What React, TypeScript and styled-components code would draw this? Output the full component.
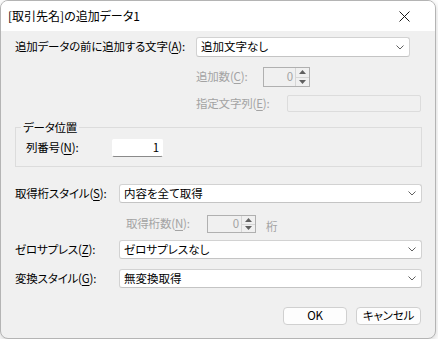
import React from "react";
import styled, { createGlobalStyle } from "styled-components";

const Global = createGlobalStyle`
  html, body { margin: 0; padding: 0; background: #ffffff; }
  body {
    font-family: "Noto Sans CJK JP", "Noto Sans", sans-serif;
    font-size: 11.5px;
    letter-spacing: -0.2px;
    font-feature-settings: "palt";
    color: #000;
  }
  u { text-underline-offset: 2px; }
`;

const Window = styled.div`
  width: 434px;
  height: 337px;
  border: 1px solid #b4b4b4;
  border-radius: 8px;
  overflow: hidden;
  background: #f0f0f0;
  box-shadow: 0 2px 6px rgba(0, 0, 0, 0.18);
  display: flex;
  flex-direction: column;
`;

const TitleBar = styled.div`
  height: 30px;
  background: #ffffff;
  display: flex;
  align-items: center;
  justify-content: space-between;
  padding: 0 25px 0 7px;
  flex-shrink: 0;
`;

const Title = styled.span`
  font-size: 12px;
  letter-spacing: 0;
  line-height: 1;
  padding-bottom: 1px;
`;

const Body = styled.div`
  flex: 1;
  padding: 6px 0 0 14px;
  display: flex;
  flex-direction: column;
`;

const Row = styled.div<{ $indent?: number; $top?: number; $h?: number }>`
  display: flex;
  align-items: center;
  height: ${(p) => p.$h ?? 20}px;
  margin-left: ${(p) => p.$indent ?? 0}px;
  margin-top: ${(p) => p.$top ?? 0}px;
`;

const Label = styled.span<{ $w: number; $disabled?: boolean }>`
  width: ${(p) => p.$w}px;
  flex-shrink: 0;
  white-space: nowrap;
  color: ${(p) => (p.$disabled ? "#a3a3a3" : "#000")};
  line-height: 1;
`;

const Combo = styled.div<{ $w: number }>`
  width: ${(p) => p.$w}px;
  height: 100%;
  box-sizing: border-box;
  background: #ffffff;
  border: 1px solid #d2d2d2;
  border-bottom-color: #c4c4c4;
  border-radius: 3px;
  display: flex;
  align-items: center;
  justify-content: space-between;
  padding: 0 5px 0 4px;
`;

const ComboText = styled.span`
  line-height: 1;
  letter-spacing: 0;
`;

const Spin = styled.div<{ $w: number }>`
  width: ${(p) => p.$w}px;
  height: 100%;
  box-sizing: border-box;
  border: 1px solid #b0b0b0;
  background: #f0f0f0;
  display: flex;
  align-items: stretch;
`;

const SpinValue = styled.span`
  flex: 1;
  text-align: right;
  color: #a3a3a3;
  padding-right: 2px;
  display: flex;
  align-items: center;
  justify-content: flex-end;
  line-height: 1;
`;

const SpinButtons = styled.div`
  width: 13px;
  display: flex;
  flex-direction: column;
  border-left: 1px solid #d6d6d6;
  background: #f0f0f0;
`;

const SpinBtn = styled.div<{ $up?: boolean }>`
  flex: 1;
  display: flex;
  align-items: center;
  justify-content: center;
  border-bottom: ${(p) => (p.$up ? "1px solid #d6d6d6" : "none")};
`;

const Field = styled.div<{ $w: number; $disabled?: boolean }>`
  width: ${(p) => p.$w}px;
  height: 100%;
  box-sizing: border-box;
  background: ${(p) => (p.$disabled ? "#f0f0f0" : "#ffffff")};
  border: 1px solid ${(p) => (p.$disabled ? "#dcdcdc" : "#ffffff")};
  border-bottom-color: ${(p) => (p.$disabled ? "#dcdcdc" : "#8a8a8a")};
  border-radius: 2px;
  display: flex;
  align-items: center;
  justify-content: flex-end;
  padding-right: 3px;
  line-height: 1;
`;

const Group = styled.div`
  position: relative;
  width: 407px;
  height: 40px;
  box-sizing: border-box;
  margin-top: 15px;
  border: 1px solid #dcdcdc;
  display: flex;
  flex-direction: column;
  padding: 11px 0 0 10px;
`;

const Legend = styled.span`
  position: absolute;
  top: -8px;
  left: 5px;
  padding: 0 2px;
  background: #f0f0f0;
  line-height: 14px;
`;

const Unit = styled.span`
  margin-left: 10px;
  color: #a3a3a3;
  line-height: 1;
  padding-top: 5px;
`;

const Buttons = styled.div`
  display: flex;
  gap: 9px;
  margin-top: 19px;
  margin-left: 268px;
  height: 18px;
`;

const Button = styled.div<{ $w: number }>`
  width: ${(p) => p.$w}px;
  height: 100%;
  box-sizing: border-box;
  background: #fdfdfd;
  border: 1px solid #d0d0d0;
  border-radius: 4px;
  display: flex;
  align-items: center;
  justify-content: center;
  line-height: 1;
`;

const Chevron = () => (
  <svg width="8" height="5" viewBox="0 0 8 5">
    <path d="M0.5 0.5 L4 4 L7.5 0.5" fill="none" stroke="#606060" strokeWidth="1" />
  </svg>
);

const Tri = ({ up }: { up?: boolean }) => (
  <svg width="7" height="4" viewBox="0 0 7 4">
    {up ? <path d="M0 4 L3.5 0 L7 4 Z" fill="#606060" /> : <path d="M0 0 L3.5 4 L7 0 Z" fill="#606060" />}
  </svg>
);

const CloseIcon = () => (
  <svg width="11" height="11" viewBox="0 0 11 11">
    <path d="M0.5 0.5 L10.5 10.5 M10.5 0.5 L0.5 10.5" stroke="#1a1a1a" strokeWidth="1" />
  </svg>
);

const SpinBox = ({ w }: { w: number }) => (
  <Spin $w={w}>
    <SpinValue>0</SpinValue>
    <SpinButtons>
      <SpinBtn $up>
        <Tri up />
      </SpinBtn>
      <SpinBtn>
        <Tri />
      </SpinBtn>
    </SpinButtons>
  </Spin>
);

export default function App() {
  return (
    <>
      <Global />
      <Window>
        <TitleBar>
          <Title>[取引先名]の追加データ1</Title>
          <CloseIcon />
        </TitleBar>
        <Body>
          <Row $h={20}>
            <Label $w={181}>
              追加データの前に追加する文字(<u>A</u>):
            </Label>
            <Combo $w={214}>
              <ComboText>追加文字なし</ComboText>
              <Chevron />
            </Combo>
          </Row>
          <Row $indent={181} $top={10} $h={20}>
            <Label $w={67} $disabled>
              追加数(<u>C</u>):
            </Label>
            <SpinBox w={47} />
          </Row>
          <Row $indent={181} $top={8} $h={17}>
            <Label $w={91} $disabled>
              指定文字列(<u>E</u>):
            </Label>
            <Field $w={134} $disabled />
          </Row>
          <Group>
            <Legend>データ位置</Legend>
            <Row $h={18}>
              <Label $w={86}>
                列番号(<u>N</u>):
              </Label>
              <Field $w={51}>1</Field>
            </Row>
          </Group>
          <Row $top={17} $h={19}>
            <Label $w={104}>
              取得桁スタイル(<u>S</u>):
            </Label>
            <Combo $w={303}>
              <ComboText>内容を全て取得</ComboText>
              <Chevron />
            </Combo>
          </Row>
          <Row $indent={111} $top={12} $h={18}>
            <Label $w={81} $disabled>
              取得桁数(<u>N</u>):
            </Label>
            <SpinBox w={49} />
            <Unit>桁</Unit>
          </Row>
          <Row $top={7} $h={19}>
            <Label $w={104}>
              ゼロサプレス(<u>Z</u>):
            </Label>
            <Combo $w={303}>
              <ComboText>ゼロサプレスなし</ComboText>
              <Chevron />
            </Combo>
          </Row>
          <Row $top={10} $h={19}>
            <Label $w={104}>
              変換スタイル(<u>G</u>):
            </Label>
            <Combo $w={303}>
              <ComboText>無変換取得</ComboText>
              <Chevron />
            </Combo>
          </Row>
          <Buttons>
            <Button $w={64}>OK</Button>
            <Button $w={65}>キャンセル</Button>
          </Buttons>
        </Body>
      </Window>
    </>
  );
}
